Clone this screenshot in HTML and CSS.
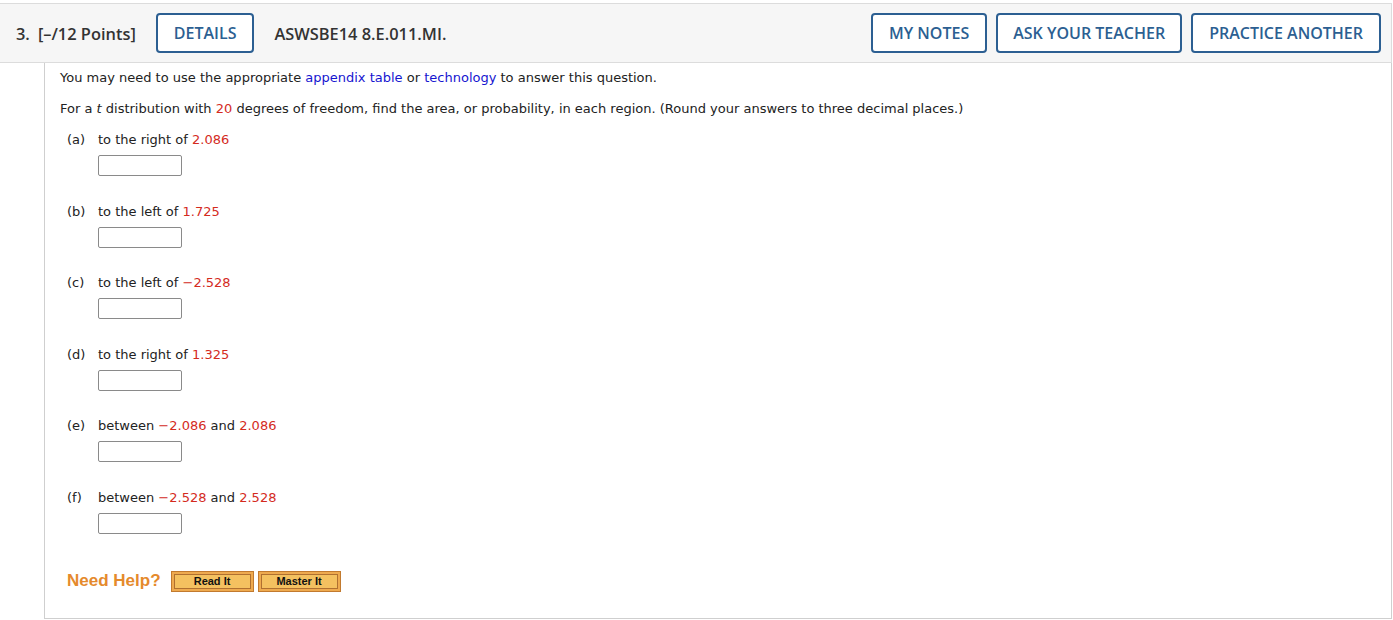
FILE: index.html
```html
<!DOCTYPE html>
<html>
<head>
<meta charset="utf-8">
<link rel="stylesheet" href="styles.css">
</head>
<body>
<div class="question">
  <div class="qhead">
    <span class="qnum">3.</span>
    <span class="qpts">[–/12 Points]</span>
    <button class="hbtn">DETAILS</button>
    <span class="qid">ASWSBE14 8.E.011.MI.</span>
    <div class="spacer"></div>
    <button class="hbtn">MY NOTES</button>
    <button class="hbtn tight">ASK YOUR TEACHER</button>
    <button class="hbtn">PRACTICE ANOTHER</button>
  </div>
  <div class="qbody">
    <p>You may need to use the appropriate <a class="lnk">appendix table</a> or <a class="lnk">technology</a> to answer this question.</p>
    <p>For a <i>t</i> distribution with <span class="num">20</span> degrees of freedom, find the area, or probability, in each region. (Round your answers to three decimal places.)</p>
    <div class="parts">
      <div class="part">
        <div class="prow"><span class="plab">(a)</span><span>to the right of <span class="num">2.086</span></span></div>
        <input class="ans" type="text">
      </div>
      <div class="part">
        <div class="prow"><span class="plab">(b)</span><span>to the left of <span class="num">1.725</span></span></div>
        <input class="ans" type="text">
      </div>
      <div class="part">
        <div class="prow"><span class="plab">(c)</span><span>to the left of <span class="num">−2.528</span></span></div>
        <input class="ans" type="text">
      </div>
      <div class="part">
        <div class="prow"><span class="plab">(d)</span><span>to the right of <span class="num">1.325</span></span></div>
        <input class="ans" type="text">
      </div>
      <div class="part">
        <div class="prow"><span class="plab">(e)</span><span>between <span class="num">−2.086</span> and <span class="num">2.086</span></span></div>
        <input class="ans" type="text">
      </div>
      <div class="part">
        <div class="prow"><span class="plab">(f)</span><span>between <span class="num">−2.528</span> and <span class="num">2.528</span></span></div>
        <input class="ans" type="text">
      </div>
    </div>
    <div class="help">
      <span class="helptxt">Need Help?</span>
      <span class="hb"><span class="hbi">Read It</span></span>
      <span class="hb"><span class="hbi">Master It</span></span>
    </div>
  </div>
</div>
</body>
</html>
```

FILE: styles.css
```css
html, body {
  margin: 0;
  padding: 0;
  background: #fff;
}
.question {
  margin-top: 3px;
  width: 1393px;
}
.qhead {
  box-sizing: border-box;
  width: 1392px;
  height: 60px;
  background: #f6f6f6;
  border-top: 1px solid #dcdcdc;
  border-bottom: 1px solid #dcdcdc;
  border-right: 1px solid #dcdcdc;
  display: flex;
  align-items: center;
  padding: 0 10px 0 16px;
  font-family: "Open Sans", "Liberation Sans", sans-serif;
  font-weight: 600;
  font-size: 16.4px;
  color: #333;
}
.qnum { margin-right: 8px; }
.qpts { margin-right: 20px; }
.qid { margin-left: 20px; }
.spacer { flex: 1; }
.hbtn {
  box-sizing: border-box;
  height: 40px;
  padding: 0 16px;
  border: 2px solid #2c5f92;
  border-radius: 4px;
  background: #fff;
  color: #2c5f92;
  font-family: "Open Sans", "Liberation Sans", sans-serif;
  font-weight: 600;
  font-size: 16px;
}
.hbtn + .hbtn { margin-left: 9px; }
.hbtn.tight { padding: 0 15px; }
.qbody {
  box-sizing: border-box;
  margin-left: 44px;
  width: 1348px;
  border-left: 1px solid #cfcfcf;
  border-right: 1px solid #cfcfcf;
  border-bottom: 1px solid #cfcfcf;
  padding: 7px 15px 26px 15px;
  font-family: "DejaVu Sans", Verdana, sans-serif;
  font-size: 13px;
  line-height: 16px;
  color: #222;
}
.qbody p { margin: 0 0 15px 0; }
.lnk { color: #1515d0; }
.num { color: #d42b1e; }
.parts {
  display: flex;
  flex-direction: column;
  gap: 27.6px;
  padding-left: 7px;
}
.part {
  display: flex;
  flex-direction: column;
}
.prow { display: flex; height: 16px; }
.plab { width: 31px; }
.ans {
  box-sizing: border-box;
  display: block;
  margin: 7px 0 0 31px;
  width: 84px;
  height: 21px;
  border: 1px solid #8a8a8a;
  border-radius: 2px;
  background: #fff;
  padding: 0;
}
.help {
  display: flex;
  align-items: center;
  margin-top: 37px;
  padding-left: 7px;
}
.helptxt {
  font-family: "Liberation Sans", Arial, sans-serif;
  font-weight: bold;
  font-size: 17px;
  color: #e58a2c;
  margin-right: 10px;
}
.hb {
  box-sizing: border-box;
  width: 83px;
  height: 21px;
  border: 1px solid #c27a2f;
  background: #eeaa4f;
  padding: 2px;
  display: flex;
  margin-right: 4px;
}
.hbi {
  flex: 1;
  border: 1px solid #b07030;
  background: #f4c160;
  font-family: "Liberation Sans", Arial, sans-serif;
  font-weight: bold;
  font-size: 11px;
  color: #111;
  display: flex;
  align-items: center;
  justify-content: center;
  line-height: 1;
}
```
